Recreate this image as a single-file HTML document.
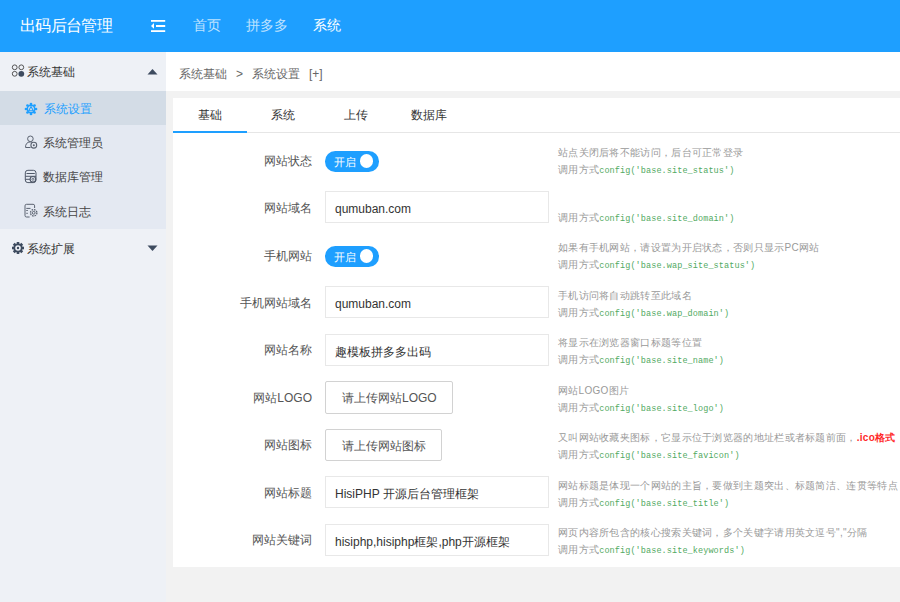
<!DOCTYPE html>
<html><head><meta charset="utf-8">
<style>
*{margin:0;padding:0;box-sizing:border-box}
html,body{width:900px;height:602px;overflow:hidden;background:#f2f2f2;font-family:"Liberation Sans",sans-serif;color:#333}
.abs{position:absolute;white-space:nowrap}
#hdr{position:absolute;left:0;top:0;width:900px;height:52px;background:#1e9fff}
#logo{left:20px;top:14.5px;font-size:16px;letter-spacing:-0.7px;line-height:22px;color:#fff}
.nav{top:15px;font-size:14px;line-height:20px;color:rgba(255,255,255,.72)}
.nav.on{color:#fff}
#side{position:absolute;left:0;top:52px;width:166px;height:550px;background:#eef1f6}
#sub{position:absolute;left:0;top:91px;width:166px;height:137.6px;background:#e4e9f2}
#subon{position:absolute;left:0;top:91px;width:166px;height:34px;background:#d3dce6}
.grp{font-size:12px;line-height:16px;color:#333}
.itm{font-size:12px;line-height:16px;color:#444}
#crumb{position:absolute;left:166px;top:52px;width:734px;height:39px;background:#fff}
.cr{top:66px;font-size:12px;line-height:16px;color:#666}
#card{position:absolute;left:173px;top:97.5px;width:727px;height:469.5px;background:#fff}
#tabline{position:absolute;left:173px;top:132px;width:727px;height:1px;background:#e6e6e6}
#tabon{position:absolute;left:173px;top:131px;width:73.5px;height:2px;background:#1e9fff}
.tab{top:107px;font-size:12px;line-height:16px;color:#333;width:73px;text-align:center}
.lbl{font-size:12px;line-height:16px;color:#555;text-align:right;width:120px;left:192px}
.inp{position:absolute;left:325px;width:224px;height:32px;border:1px solid #e8e8e8;background:#fff;font-size:12px;line-height:34px;padding-left:9px;color:#333;white-space:nowrap;overflow:hidden}
.btn{position:absolute;left:325px;height:32.5px;border:1px solid #d2d2d2;border-radius:2px;background:#fff;font-size:12px;line-height:33px;padding-left:16px;color:#555;white-space:nowrap}
.sw{position:absolute;left:325px;width:54px;height:20.5px;border-radius:10.25px;background:#1e9fff}
.sw i{position:absolute;left:34.5px;top:3.3px;width:13.6px;height:13.6px;border-radius:7px;background:#fff}
.sw b{position:absolute;left:9px;top:2.5px;font-weight:normal;font-size:11px;line-height:16px;color:#fff}
.help{left:558px;font-size:10px;letter-spacing:0.3px;line-height:17px;color:#999}
.help code{font-family:"Liberation Mono",monospace;font-size:8.5px;letter-spacing:0.1px;color:#52aa62}
.red{color:#ff2a2a;font-weight:bold}
</style></head><body>
<div id="hdr"></div>
<div class="abs" id="logo">出码后台管理</div>
<svg class="abs" style="left:151px;top:20px" width="15" height="13" viewBox="0 0 15 13">
<rect x="0" y="0" width="14.2" height="1.8" fill="#fff"/>
<polygon points="0,6 3,3 3,8.8" fill="#fff"/>
<rect x="5" y="5" width="9.2" height="2" fill="#fff"/>
<rect x="0" y="10.2" width="14.2" height="1.8" fill="#fff"/>
</svg>
<div class="abs nav" style="left:193px">首页</div>
<div class="abs nav" style="left:246px">拼多多</div>
<div class="abs nav on" style="left:313px">系统</div>

<div id="side"></div>
<div id="sub"></div>
<div id="subon"></div>
<!-- group 1 -->
<svg class="abs" style="left:11px;top:64px" width="14" height="14" viewBox="0 0 14 14">
<circle cx="3.7" cy="3.3" r="2.4" fill="none" stroke="#555" stroke-width="1"/>
<circle cx="10.3" cy="3.3" r="2.4" fill="none" stroke="#555" stroke-width="1"/>
<circle cx="3.7" cy="9.8" r="2.4" fill="none" stroke="#555" stroke-width="1"/>
<circle cx="10.3" cy="9.8" r="2.9" fill="#3d4b5f"/>
</svg>
<div class="abs grp" style="left:27px;top:63.5px">系统基础</div>
<svg class="abs" style="left:147px;top:68px" width="11" height="7" viewBox="0 0 11 7"><polygon points="0.5,6.5 5.5,1 10.5,6.5" fill="#3d4b5f"/></svg>
<!-- items -->
<svg class="abs" style="left:24px;top:102px" width="14" height="14" viewBox="0 0 14 14">
<g fill="#1e9fff">
<circle cx="7" cy="2" r="1.35"/><circle cx="7" cy="12" r="1.35"/><circle cx="2" cy="7" r="1.35"/><circle cx="12" cy="7" r="1.35"/>
<circle cx="3.5" cy="3.5" r="1.35"/><circle cx="10.5" cy="3.5" r="1.35"/><circle cx="3.5" cy="10.5" r="1.35"/><circle cx="10.5" cy="10.5" r="1.35"/></g>
<circle cx="7" cy="7" r="3.7" fill="none" stroke="#1e9fff" stroke-width="1.5"/>
<path d="M7,4.6 L9.3,8.8 H4.7 Z M9.3,8.8 L10.5,10.5" fill="none" stroke="#1e9fff" stroke-width="1.1"/>
</svg>
<div class="abs itm" style="left:43.5px;top:101px;color:#1e9fff">系统设置</div>

<svg class="abs" style="left:22px;top:133px" width="18" height="19" viewBox="0 0 18 19">
<g fill="none" stroke="#5a6270" stroke-width="1">
<circle cx="8.4" cy="5.8" r="2.8"/>
<path d="M3.6,14.5 C3.2,11.5 5,8.9 8.3,8.9 C9.3,8.9 10.2,9.2 10.9,9.6"/>
<path d="M3.6,14.5 H8.5"/>
</g>
<circle cx="11.8" cy="12.2" r="2.9" fill="#e4e9f2" stroke="#5a6270" stroke-width="1.1"/>
<circle cx="11.8" cy="12.2" r="1" fill="#5a6270"/>
</svg>
<div class="abs itm" style="left:43px;top:135px">系统管理员</div>

<svg class="abs" style="left:22px;top:167px" width="18" height="19" viewBox="0 0 18 19">
<g fill="none" stroke="#4f5868" stroke-width="1">
<rect x="3.3" y="3.3" width="10.7" height="12.3" rx="2.6"/>
<path d="M4.5,6.5 H12.8 M3.3,9.3 H14 M3.3,12.3 H8"/>
</g>
<circle cx="10.9" cy="12.3" r="2.8" fill="#e4e9f2" stroke="#4f5868" stroke-width="1.1"/>
<circle cx="10.9" cy="12.3" r="1" fill="none" stroke="#4f5868" stroke-width="0.8"/>
</svg>
<div class="abs itm" style="left:43px;top:169px">数据库管理</div>

<svg class="abs" style="left:22px;top:201px" width="18" height="19" viewBox="0 0 18 19">
<g fill="none" stroke="#5a6270" stroke-width="1">
<path d="M12.6,7 V4.8 Q12.6,3.3 11.1,3.3 H4.5 Q3,3.3 3,4.8 V14.5 Q3,16 4.5,16 H7.6"/>
<path d="M4.3,7.4 H8.5 M4.3,9.5 H5.8 M4.3,12.3 H5.8"/>
</g>
<circle cx="11.7" cy="11.8" r="3.2" fill="#e4e9f2" stroke="#5a6270" stroke-width="1.3" stroke-dasharray="1.6 0.9"/>
<circle cx="11.7" cy="11.8" r="1.4" fill="none" stroke="#5a6270" stroke-width="1"/>
</svg>
<div class="abs itm" style="left:43px;top:203.5px">系统日志</div>

<!-- group 2 -->
<svg class="abs" style="left:12px;top:242px" width="12" height="12" viewBox="0 0 12 12">
<g fill="#3d4b5f"><circle cx="6" cy="6" r="4.6"/>
<rect x="4.7" y="0" width="2.6" height="12"/><rect x="0" y="4.7" width="12" height="2.6"/>
<rect x="4.7" y="0" width="2.6" height="12" transform="rotate(45 6 6)"/><rect x="4.7" y="0" width="2.6" height="12" transform="rotate(-45 6 6)"/></g>
<circle cx="6" cy="6" r="2.8" fill="#eef1f6"/>
<circle cx="6" cy="6" r="1.2" fill="#3d4b5f"/>
</svg>
<div class="abs grp" style="left:27px;top:241px">系统扩展</div>
<svg class="abs" style="left:147px;top:245px" width="11" height="7" viewBox="0 0 11 7"><polygon points="0.5,0.5 10.5,0.5 5.5,6" fill="#3d4b5f"/></svg>

<!-- breadcrumb -->
<div id="crumb"></div>
<div class="abs cr" style="left:179px">系统基础</div>
<div class="abs cr" style="left:236px">&gt;</div>
<div class="abs cr" style="left:252px">系统设置</div>
<div class="abs cr" style="left:309px">[+]</div>

<!-- card -->
<div id="card"></div>
<div id="tabline"></div>
<div id="tabon"></div>
<div class="abs tab" style="left:173px">基础</div>
<div class="abs tab" style="left:246px">系统</div>
<div class="abs tab" style="left:319px">上传</div>
<div class="abs tab" style="left:392px">数据库</div>

<!-- rows: pitch 47.5, row1 center 160 -->
<div class="abs lbl" style="top:153px">网站状态</div>
<div class="sw" style="top:151px"><b>开启</b><i></i></div>
<div class="abs help" style="top:144px">站点关闭后将不能访问，后台可正常登录<br>调用方式<code>config('base.site_status')</code></div>

<div class="abs lbl" style="top:199.5px">网站域名</div>
<div class="inp" style="top:191px">qumuban.com</div>
<div class="abs help" style="top:191.5px">&nbsp;<br>调用方式<code>config('base.site_domain')</code></div>

<div class="abs lbl" style="top:248px">手机网站</div>
<div class="sw" style="top:246px"><b>开启</b><i></i></div>
<div class="abs help" style="top:239px">如果有手机网站，请设置为开启状态，否则只显示PC网站<br>调用方式<code>config('base.wap_site_status')</code></div>

<div class="abs lbl" style="top:294.5px">手机网站域名</div>
<div class="inp" style="top:286px">qumuban.com</div>
<div class="abs help" style="top:286.5px">手机访问将自动跳转至此域名<br>调用方式<code>config('base.wap_domain')</code></div>

<div class="abs lbl" style="top:342px">网站名称</div>
<div class="inp" style="top:334px">趣模板拼多多出码</div>
<div class="abs help" style="top:334px">将显示在浏览器窗口标题等位置<br>调用方式<code>config('base.site_name')</code></div>

<div class="abs lbl" style="top:389.5px">网站LOGO</div>
<div class="btn" style="top:381px;width:128px">请上传网站LOGO</div>
<div class="abs help" style="top:381.5px">网站LOGO图片<br>调用方式<code>config('base.site_logo')</code></div>

<div class="abs lbl" style="top:437px">网站图标</div>
<div class="btn" style="top:428.5px;width:117px">请上传网站图标</div>
<div class="abs help" style="top:429px">又叫网站收藏夹图标，它显示位于浏览器的地址栏或者标题前面，<span class="red">.ico格式</span><br>调用方式<code>config('base.site_favicon')</code></div>

<div class="abs lbl" style="top:484.5px">网站标题</div>
<div class="inp" style="top:476px">HisiPHP 开源后台管理框架</div>
<div class="abs help" style="top:476.5px">网站标题是体现一个网站的主旨，要做到主题突出、标题简洁、连贯等特点<br>调用方式<code>config('base.site_title')</code></div>

<div class="abs lbl" style="top:532px">网站关键词</div>
<div class="inp" style="top:524px">hisiphp,hisiphp框架,php开源框架</div>
<div class="abs help" style="top:524px">网页内容所包含的核心搜索关键词，多个关键字请用英文逗号","分隔<br>调用方式<code>config('base.site_keywords')</code></div>
</body></html>
